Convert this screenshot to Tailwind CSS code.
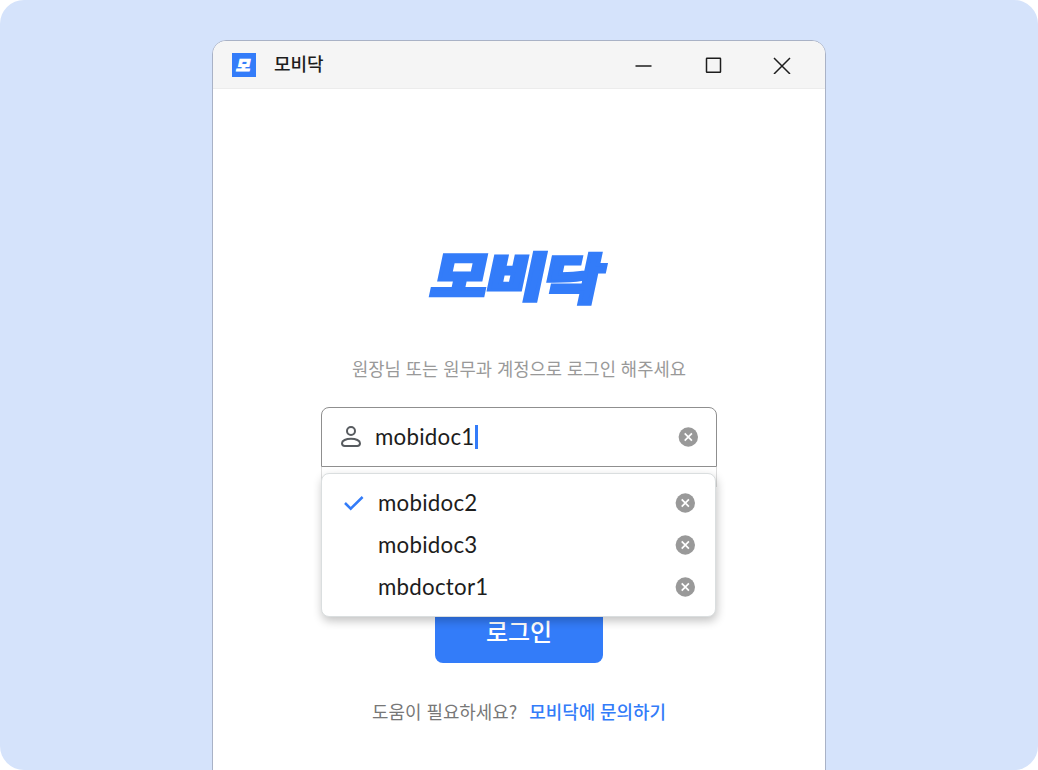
<!DOCTYPE html>
<html lang="ko">
<head>
    <meta charset="UTF-8">
    <meta name="viewport" content="width=device-width, initial-scale=1.0">
    <title>모비닥</title>
    <script src="https://cdn.jsdelivr.net/npm/@tailwindcss/browser@4"></script>
</head>
<body class="bg-white overflow-hidden font-['Noto_Sans_CJK_KR',sans-serif] text-[#1d1d1d]">

    <svg class="hidden">
        <symbol id="clear-icon" viewBox="0 0 20 20">
            <circle cx="10.300" cy="10" r="9.7" fill="#999999"/>
            <path d="M6.700 6.4l7.2 7.2M13.900 6.4l-7.2 7.2" stroke="#fff" stroke-width="1.7"/>
        </symbol>
    </svg>

    <main class="w-[1038px] h-[770px] bg-[#d5e3fb] rounded-3xl overflow-hidden pt-10">
        <div class="w-[614px] h-[760px] mx-auto bg-white border border-[#a9b2c6] rounded-[14px] overflow-hidden">

            <!-- title bar -->
            <header class="h-12 bg-[#f5f5f5] border-b border-[#ececec] flex items-center pl-[19px] pr-[34px]">
                <svg class="w-6 h-6" viewBox="0 0 24 24" overflow="visible">
                    <rect width="24" height="24" fill="#337cf9"/>
                    <text transform="translate(3.800 18) skewX(-12)" font-size="15" font-weight="900" fill="#fff" stroke="#fff" stroke-width="1.1">모</text>
                </svg>
                <h1 class="ml-[18px] pb-[3px] text-[18px] leading-6 font-medium">모비닥</h1>
                <div class="ml-auto flex items-center gap-[51px]">
                    <svg class="w-[18px] h-[18px]" viewBox="0 0 18 18" fill="none" stroke="#1d1d1d" stroke-width="1.5"><path d="M.5 10h16"/></svg>
                    <svg class="w-[18px] h-[18px]" viewBox="0 0 18 18" fill="none" stroke="#1d1d1d" stroke-width="1.5"><rect x="2.500" y="2.200" width="14" height="14" rx=".5"/></svg>
                    <svg class="w-[18px] h-[18px]" viewBox="0 0 18 18" fill="none" stroke="#1d1d1d" stroke-width="1.5"><path d="M1 2l16 16M17 2L1 18"/></svg>
                </div>
            </header>

            <section class="flex flex-col items-center pt-[154px]">
                <svg class="w-[190px] h-[70px]" viewBox="0 0 190 70" overflow="visible" font-size="62" font-weight="900" fill="#337cf9" stroke="#337cf9" stroke-width="4">
                    <text transform="translate(4.700 53) skewX(-12) scale(.98 .85)">모</text>
                    <text transform="translate(58.500 52.500) skewX(-12) scale(1.060 .83)">비</text>
                    <text transform="translate(116.500 56) skewX(-12) scale(1.040 .87)">닥</text>
                </svg>

                <p class="mt-[43px] text-[17.7px] leading-6 text-[#999999]">원장님 또는 원무과 계정으로 로그인 해주세요</p>

                <div class="relative mt-[27px] w-[396px] font-['Lato','Noto_Sans_CJK_KR',sans-serif]">
                    <div class="h-[60px] flex items-center border border-[#8f8f8f] rounded-t-lg pl-[19px] pr-[18px]">
                        <svg class="w-5 h-[22px]" viewBox="0 0 20 22" fill="none" stroke="#575b5f" stroke-width="2">
                            <circle cx="10" cy="5" r="4"/>
                            <path d="M1 17.200c0-2.600 4-4.400 9-4.400s9 1.800 9 4.400c0 1.900-1 2.700-2.800 2.700H3.800C2 19.900 1 19.100 1 17.200z"/>
                        </svg>
                        <span class="ml-[14px] text-[22.3px] leading-8 tracking-[0.25px]">mobidoc1</span>
                        <span class="w-[3px] h-6 bg-[#337cf9]"></span>
                        <svg class="w-5 h-5 ml-auto"><use href="#clear-icon"/></svg>
                    </div>
                    <div class="h-[60px]">
                        <div class="h-5 border-x border-[#dddddd]"></div>
                    </div>

                    <!-- saved accounts -->
                    <ul class="absolute left-0 top-[66px] w-[395px] h-[144px] bg-white border border-[#dadedf] rounded-lg shadow-[1px_4px_10px_rgba(0,0,0,0.24)] pt-2 pl-[22px] pr-5 text-[22.3px] tracking-[0.25px]">
                        <li class="h-[42px] flex items-center">
                            <svg class="w-5 h-5" viewBox="0 0 20 20" fill="none" stroke="#337cf9" stroke-width="2.5"><path d="M1 10l5.700 5.700L18.600 4"/></svg>
                            <span class="ml-[14px]">mobidoc2</span>
                            <svg class="w-5 h-5 ml-auto"><use href="#clear-icon"/></svg>
                        </li>
                        <li class="h-[42px] flex items-center">
                            <span class="ml-[34px]">mobidoc3</span>
                            <svg class="w-5 h-5 ml-auto"><use href="#clear-icon"/></svg>
                        </li>
                        <li class="h-[42px] flex items-center">
                            <span class="ml-[34px]">mbdoctor1</span>
                            <svg class="w-5 h-5 ml-auto"><use href="#clear-icon"/></svg>
                        </li>
                    </ul>
                </div>

                <button class="mt-[76px] w-[168px] h-[60px] pb-1 rounded-lg bg-[#337cf9] text-white text-2xl font-medium">로그인</button>

                <p class="mt-[36px] flex gap-3 text-[17.9px] leading-6">
                    <span class="text-[#777777]">도움이 필요하세요?</span>
                    <a href="#" class="font-medium text-[#337cf9]">모비닥에 문의하기</a>
                </p>
            </section>
        </div>
    </main>
</body>
</html>
